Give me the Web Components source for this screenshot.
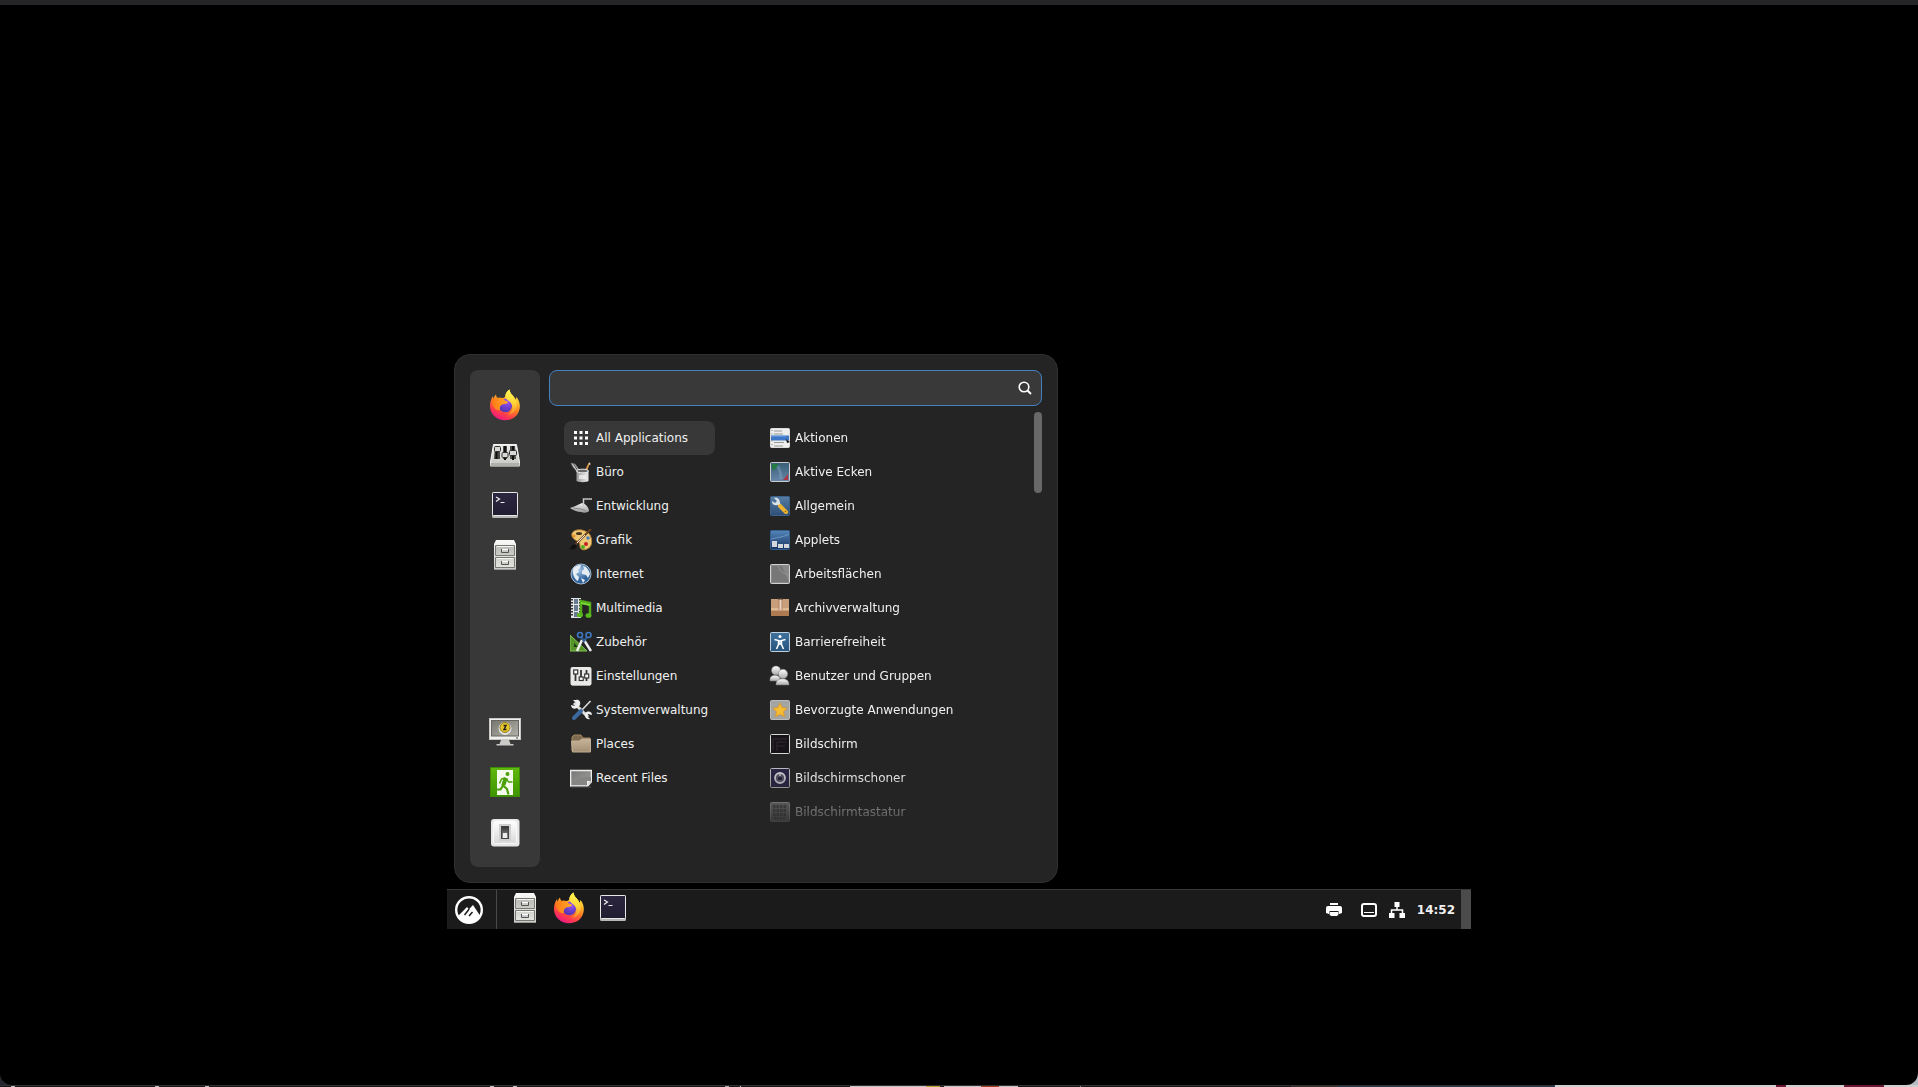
<!DOCTYPE html>
<html lang="de">
<head>
<meta charset="utf-8">
<title>Desktop</title>
<style>
  html, body {
    margin: 0;
    height: 100%;
  }
  body {
    background: linear-gradient(90deg, #25272f 50%, #b4bcc5 50%);
    font-family: "DejaVu Sans", sans-serif;
    font-size: 12px;
    color: #f0f0f0;
  }
</style>
</head>
<body>
<remote-viewer>
  <desktop-screen>
    <start-menu></start-menu>
    <task-bar></task-bar>
  </desktop-screen>
</remote-viewer>

<script>
const gradient = (id, from, to, dir = 'x2="0" y2="1"') => `
  <linearGradient id="${id}" ${dir}><stop stop-color="${from}"/><stop offset="1" stop-color="${to}"/></linearGradient>`;

// frame shared by the square settings icons
const tile = (fill, stroke) => `<rect x="1.5" y="1.5" width="19" height="19" rx="1" fill="${fill}" stroke="${stroke}"/>`;

const ICONS = {
  // launcher icons, 32 units
  firefox: [32, `
    <defs>
      <linearGradient id="a" x1=".8" y1="0" x2=".3" y2="1">
        <stop stop-color="#fff44f"/><stop offset=".3" stop-color="#ffc130"/>
        <stop offset=".55" stop-color="#ff7a25"/><stop offset=".8" stop-color="#ff3750"/><stop offset="1" stop-color="#e8168a"/>
      </linearGradient>
      <radialGradient id="b" cx=".65" cy=".2" r=".9"><stop stop-color="#a55cf0"/><stop offset=".5" stop-color="#7040d0"/><stop offset="1" stop-color="#4a34a8"/></radialGradient>
      <linearGradient id="c"><stop stop-color="#ff7a18"/><stop offset="1" stop-color="#ffab27"/></linearGradient>
      <linearGradient id="d" x2="0" y2="1"><stop stop-color="#fff650"/><stop offset=".5" stop-color="#ffd93a"/><stop offset="1" stop-color="#ff8a28"/></linearGradient>
    </defs>
    <path fill="url(#a)" d="M1 17c0-4 1-7 3-10 0 1 .3 2 .8 2.600C5.300 7.500 6 6.300 7 5.500c0 1.500.8 3 2.200 3.500 1.400-.4 2.800-.2 4.300.2L16 8c0-3 1.800-6 4.500-7.500.3 3.500 2.500 5 4.500 7.500.8 1 1.200 2 1.600 3l.9-3c2.500 3 3.500 6.500 3.300 10C30.300 26 24 31.300 16 31.300S1 25.500 1 17z"/>
    <circle cx="16.300" cy="16.500" r="6.800" fill="url(#b)"/>
    <path fill="url(#d)" d="M20.500.5c.3 3.500 2.500 5 4.500 7.500 2.500 3.200 3.700 8 1.500 12.500-1.500 3-4.500 5-7.500 5.500 4-3 5.500-7 3.500-11-.9-2-3-3.200-4.500-4.500C15.500 7.500 16.500 3 20.500.5z"/>
    <path fill="url(#c)" d="M3 11c2-1.500 4-2 6-2 2-.4 4 0 5.500.8.5 1.500 2 2 4 2.700.8.4.4 1.200-.5 1.700-1.800 1-3.500.6-4.800 1.300-2 1-3 3-2.200 5.500C6 22 3 17 3 11z"/>`],
  mixer: [32, `
    <defs>${gradient('a', '#ededeb', '#c6c6c3')}</defs>
    <path d="M4.500 5.500h23l3 17.500v4h-29v-4z" fill="url(#a)" stroke="#f5f5f4"/>
    <path d="M1.500 24h29v3h-29z" fill="#b0b0ad"/>
    <path d="M6 7h5v13H5zm8 0h4v13h-4zm7 0h5l1 13h-6z" fill="#4a4a48"/>
    <g fill="#d8d8d6" stroke="#30302e"><rect x="5.500" y="7.500" width="6" height="5" rx="1"/><rect x="13" y="13.500" width="6" height="5" rx="1"/><rect x="20.500" y="11.500" width="7" height="5" rx="1"/></g>
    <path d="M7.500 13v7M16 7v6M16 19v2M24 7v4M24 17v4" stroke="#111" stroke-width="2"/>`],
  terminal: [32, `
    <defs>${gradient('a', '#2c2640', '#211d31')}</defs>
    <rect x="3" y="3" width="26" height="26" rx="1.500" fill="#b7b7b5"/>
    <rect x="3.500" y="3.500" width="25" height="23" rx="1" fill="url(#a)" stroke="#e8e8e8"/>
    <path d="M7 8l3.500 2L7 12.500M11.500 13.500H15.500" fill="none" stroke="#eee" stroke-width="1.200"/>`],
  files: [32, `
    <defs>${gradient('a', '#fafaf9', '#c9c9c6')}${gradient('b', '#b9b9b5', '#e3e3e0')}</defs>
    <path d="M7 1h18l2 4v26H5V5z" fill="url(#a)"/>
    <path d="M6.500 6.500h19v10h-19zM6.500 18.500h19v10h-19z" fill="url(#b)" stroke="#777774"/>
    <path d="M7.500 7.500h17M7.500 19.500h17" stroke="#f3f3f2"/>
    <path d="M12.500 10v3.500h7V10M12.500 22v3.500h7V22" fill="#ccc" stroke="#555"/>
    <path d="M13 10.500h6M13 22.500h6" stroke="#fff"/><path d="M5 30.500h22" stroke="#999"/>`],
  lock: [32, `
    <defs>${gradient('a', '#77776f', '#b0b0a8', 'x2="1" y2="1"')}</defs>
    <rect x=".5" y="2.500" width="31" height="21" fill="#efefed" stroke="#c8c8c5"/>
    <rect x="2.500" y="4.500" width="27" height="15.500" fill="url(#a)" stroke="#666660"/>
    <path d="M12 24h8l1.500 4h3v1.500h-17V28h3z" fill="#cacac7"/>
    <path d="M27 22h2" stroke="#444"/>
    <circle cx="16" cy="12.500" r="6.500" fill="#e3e3df"/><circle cx="16" cy="11.500" r="5" fill="#e8c729" stroke="#8b7925"/>
    <path d="M14.500 9.500h2.500l-2 4h2.500" fill="none" stroke="#222" stroke-width="1.500"/>`],
  logout: [32, `
    <defs>${gradient('a', '#62b80e', '#3e9500')}</defs>
    <rect x="1.500" y="1.500" width="29" height="29" fill="url(#a)" stroke="#3d8a08"/>
    <path d="M8 4h16v25H8z" fill="#f4fbed"/>
    <g fill="none" stroke="#4ca00b" stroke-width="2.200" stroke-linejoin="round"><circle cx="18.500" cy="8" r="1.200" fill="#4ca00b" stroke-width="1.500"/>
    <path d="M16.500 12l-3 7 4.500 4 1.500 5.500M14 19.500l-2.500 4H5.500"/><path d="M16.500 12l-4 1-2 4.500M17.500 12.500l2 3.500h4" stroke-width="1.500"/><path d="M16.700 12l-2.200 7" stroke-width="4"/></g>`],
  power: [32, `
    <defs>${gradient('a', '#ffffff', '#d9d9d9')}${gradient('b', '#333', '#999')}</defs>
    <rect x="2" y="3" width="28.500" height="27.500" rx="3" fill="#e7e7e7"/>
    <rect x="4.500" y="5" width="23" height="22.500" rx="2" fill="url(#a)" stroke="#f8f8f8"/>
    <rect x="10" y="8" width="12" height="17" fill="#d0d0d0"/>
    <rect x="12.500" y="10.500" width="7" height="12" fill="url(#b)" stroke="#444"/>
    <path d="M14 17h4v5h-4z" fill="#ececec"/>`],
  start: [28, `
    <circle cx="14" cy="14" r="12.800" fill="none" stroke="#fff" stroke-width="2.400"/>
    <path d="M3.500 19.500L12 11l2 2.300 4-4.300 7 10.500C23 24 19 26.500 14 26.500S5.500 24 3.500 19.500z" fill="#fff"/>
    <path d="M9.500 19l4.700-6M17.500 16l-3.500 4" stroke="#1b1b1b" stroke-width="1.500"/>`],

  // tray symbols, 16 units
  printer: [16, `<path fill="#fff" d="M4 1h8v2H4zM2 4h12a2 2 0 0 1 2 2v5l-3 1V9H3v3l-3-1V6a2 2 0 0 1 2-2zM4 10h8v3l-1 1H5l-1-1z"/><path fill="#fff" d="M2 9h1.500v4.500zM14 9h-1.500v4.500z"/>`],
  screen: [16, `<rect x="1" y="2" width="14" height="12" rx="2" fill="none" stroke="#fff" stroke-width="2"/><path d="M3 10.500h10" stroke="#fff"/>`],
  network: [16, `<path fill="#fff" d="M5.500 0h5v5h-5zM0 11h5.500v5H0zM10.500 11H16v5h-5.500z"/><path d="M8 4v4M2.500 12V8h11v4" fill="none" stroke="#fff" stroke-width="1.500"/>`],
  search: [16, `<circle cx="7" cy="7" r="4.800" fill="none" stroke="#fff" stroke-width="1.600"/><path d="M10.500 10.500l3.500 3.500" stroke="#fff" stroke-width="2"/>`],

  // category icons, 22 units
  grid: [22, `<path d="M4 5.500h14M4 11h14M4 16.500h14" stroke="#fff" stroke-width="3" stroke-dasharray="3 2.500"/>`],
  office: [22, `
    <defs>${gradient('a', '#999', '#eee', '')}</defs>
    <path d="M1 2l4 1 5 7-2 2-5-6z" fill="#c9c9c9" stroke="#777" stroke-width=".6"/><path d="M3 2l5 8" stroke="#555"/>
    <path d="M18.500 2l1.500.5-4 9.500-2-1z" fill="#d9984a"/><path d="M20 1l.5 3-2-1z" fill="#f0dfc8"/>
    <path d="M6.500 10v10c2 1.500 10 1.500 12 0V10z" fill="url(#a)"/><ellipse cx="12.500" cy="10" rx="6" ry="1.800" fill="#666" stroke="#eee"/>
    <path d="M9 14h7v4H9z" fill="#f3f3f3" opacity=".7"/>`],
  dev: [22, `
    <defs>${gradient('a', '#f1f1f1', '#999')}</defs>
    <path d="M0 13c4-1 7-3 12-5 4 1 7 5 7 8-2 2-5 2-8 1-4 0-8-2-11-4z" fill="url(#a)"/>
    <path d="M13.500 12V4H22" fill="none" stroke="#ccc" stroke-width="1.500"/><path d="M14 4h7" stroke="#888" stroke-dasharray="1 1"/>
    <path d="M3 13l8 1 5 2" stroke="#777" fill="none" stroke-width=".7"/>`],
  graphics: [22, `
    <path d="M3 3c4-4 14-2 17 3 3 6 2 12-3 14-4 2-7 0-7-3s-1-4-3-5C3 10 0 6 3 3z" fill="#edc876" stroke="#b78535"/>
    <ellipse cx="9" cy="4.500" rx="3" ry="1.500" fill="#49331b"/><circle cx="16" cy="15" r="2" fill="#c71f1f"/><circle cx="18" cy="9" r="1.800" fill="#5181be"/><circle cx="13" cy="18" r="2" fill="#50ac24"/><circle cx="4" cy="7" r="1.500" fill="#e99126"/>
    <path d="M21 0L5 16" stroke="#694020" stroke-width="2"/><path d="M15 6l-8 8" stroke="#f0eee2"/><path d="M0 20c1-4 3-4 5-5l2 2c-1 3-4 4-7 3z" fill="#111"/>`],
  internet: [22, `
    <defs><radialGradient id="a" cx=".4" cy=".3"><stop stop-color="#a9c9eb"/><stop offset="1" stop-color="#31639b"/></radialGradient></defs>
    <circle cx="11" cy="11" r="10" fill="url(#a)" stroke="#a7bdd2"/>
    <path d="M3 6c2-3 5-4 8-4l-1 3-2 2 1 2-3 2 3 3-1 4c-3-1-6-7-5-12zM13 3c4 1 6 4 7 8l-2 4-2-3-4-1V8l2-2zM11 15l4 2-2 3z" fill="#e6edf2"/>`],
  media: [22, `
    <rect x="1" y="1" width="10" height="20" fill="#e4e4e4"/><path d="M2 2v18M10 2v18" stroke="#333" stroke-width="2" stroke-dasharray="1.500 1.500"/>
    <path d="M4 2h4v5H4zM4 8h4v6H4zM4 15h4v5H4z" fill="#667a91"/>
    <path d="M11 17V4l9 2v11" fill="none" stroke="#52a91a" stroke-width="2.500"/><path d="M11 6l9 2" stroke="#79dd34" stroke-width="2"/><ellipse cx="10" cy="18" rx="3" ry="2.300" fill="#59b91c"/><ellipse cx="18.500" cy="18.500" rx="3" ry="2.300" fill="#59b91c"/>`],
  tools: [22, `
    <path d="M0 4l17 16H0z" fill="#57942a" stroke="#85c657"/><path d="M4 12v4h4z" fill="#1f3b13"/>
    <path d="M12 9l-5 11M14 9l7 11" stroke="#eee" stroke-width="2.500"/><path d="M11 6l3 4 3-4" stroke="#345f9c" stroke-width="2" fill="none"/>
    <circle cx="10" cy="4" r="2.500" fill="none" stroke="#3d77c2" stroke-width="1.600"/><circle cx="18.500" cy="4" r="2.500" fill="none" stroke="#3d77c2" stroke-width="1.600"/>`],
  settings: [22, `
    <rect x=".5" y="2" width="21" height="18.500" rx="2" fill="#e9e9e8"/><path d="M2 20.500h18" stroke="#aaa"/>
    <path d="M5.500 5v11M11 5v11M16.500 5v11" stroke="#333" stroke-width="1.800"/><g fill="#fff" stroke="#333" stroke-width="1.200"><rect x="3.700" y="5" width="4" height="4"/><rect x="9.200" y="12" width="4" height="3.500"/><rect x="14.700" y="9" width="4" height="4"/></g>`],
  admin: [22, `
    <path d="M4 4l14 14" stroke="#ddd" stroke-width="3"/><path d="M3 1l3 3-1 3-4-1c0 3 3 5 6 3l3-3c1-3-1-6-4-5zM15 14c-1 4 2 7 5 6l-3-3 1-2 4 1c0-3-3-5-7-2z" fill="#eee"/>
    <path d="M20.500 2L11 12" stroke="#ddd" stroke-width="1.600"/><path d="M11 12l-7 7" stroke="#3b689e" stroke-width="4" stroke-linecap="round"/>`],
  folder: [22, `
    <defs>${gradient('a', '#c8b49a', '#a38f74')}</defs>
    <path d="M2 18V4l2-2h7l2 3h7v12z" fill="#7f6c50" stroke="#a18660"/><path d="M1.500 8h8l2-2h9v13h-18z" fill="url(#a)" stroke="#c1ad90"/>`],
  recent: [22, `
    <defs>${gradient('a', '#777775', '#a0a09e', 'x2="1" y2="1"')}</defs>
    <path d="M.5 3.500h21v11l-4 4.500H.5z" fill="url(#a)" stroke="#ededed" stroke-width="1.600"/><path d="M2 14c7-1 11-5 19-4v5l-4 3H2z" fill="#858583"/><path d="M21 14h-4v4.500z" fill="#eee"/><path d="M1 20h20" stroke="#555"/>`],

  // application icons, 22 units
  actions: [22, `
    ${tile('#eeeeec', '#ddd')}<path d="M2 8.500h18v5H2z" fill="#3c78c7"/><path d="M2 9h15" stroke="#79a8e5"/>
    <path d="M5 4h8M5 7h9M5 15.500h10M5 19h9" stroke="#999"/><path d="M3 3v16" stroke="#777" stroke-dasharray="1 2.500"/><path d="M17 12l4 3-3 1z" fill="#111"/>`],
  corners: [22, `
    <defs>${gradient('a', '#385f75', '#6787aa')}</defs>${tile('url(#a)', '#ccc')}<path d="M3 3h6c-1 4-3 6-6 6z" fill="#257b44"/><path d="M19 19h-5l5-6z" fill="#ae3642"/><path d="M9 5c2 4 3 9 3 13" stroke="#8aa9c2" stroke-width="3" opacity=".4" fill="none"/>`],
  general: [22, `
    <defs>${gradient('a', '#577ea5', '#2d4d75')}</defs>${tile('url(#a)', '#3e638b')}<path d="M5 3l3 3-2 2-3-2c0 4 3 5 6 4l2 3 2-2-2-3c0-3-2-6-6-5z" fill="#dce3e8"/><path d="M11 11l6 6" stroke="#edb42f" stroke-width="4" stroke-linecap="round"/><circle cx="16.500" cy="16.500" r=".8" fill="#916214"/>`],
  applets: [22, `
    <defs>${gradient('a', '#5485ba', '#17345e')}</defs>${tile('url(#a)', '#355f91')}<path d="M3 12h5v6H3zM9 15h5v4H9zM15 15h5v4h-5z" fill="#d2d8dc"/><path d="M2 10c8-2 13-2 18-5" stroke="#6c98c7" fill="none"/>`],
  workspaces: [22, `${tile('#888', '#d0d0d0')}<path d="M3 3h10l6 14v2H3z" fill="#777"/><path d="M9 3c2 6 7 8 10 9" fill="none" stroke="#969696"/>`],
  archive: [22, `
    <path d="M2 2h18v17H2z" fill="#c99e7a"/><path d="M2 14h18v5H2z" fill="#ae7a52"/><path d="M2 12h18" stroke="#ddb994" stroke-width="2"/>
    <path d="M9.500 2h4v11h-4z" fill="#ae8265"/><path d="M11.500 2v11" stroke="#ead5c0" stroke-width="2"/><path d="M9 1h5v1.500H9z" fill="#45372e"/>`],
  access: [22, `
    <defs>${gradient('a', '#3e739e', '#27537c')}</defs>${tile('url(#a)', '#bfd0df')}<circle cx="11" cy="5.500" r="1.500" fill="#fff"/><path d="M5.500 8.500l4 1v4L7.500 18M16.500 8.500l-4 1v4l2 4.500M10 10v3h2v-3z" fill="none" stroke="#fff" stroke-width="1.500"/>`],
  users: [22, `
    <defs>${gradient('a', '#fff', '#a8a8a7')}</defs><g fill="url(#a)" stroke="#777" stroke-width=".5"><path d="M1 14c0-5 10-5 10 0v2H1z"/><circle cx="7" cy="5.500" r="4.500"/><path d="M7 19c0-7 13-7 13 0v1H7z"/><circle cx="14" cy="9" r="4.700"/></g>`],
  preferred: [22, `${tile('#a4a4a2', '#bcbcba')}<path d="M11 4l2.200 4.600 5 .6-3.700 3.500 1 5-4.500-2.500-4.500 2.500 1-5-3.700-3.500 5-.6z" fill="#f5bd36" stroke="#df9119" stroke-width=".7"/>`],
  display: [22, `${tile('#171419', '#d5d5d5')}<path d="M4 17V6h14M8 18V9h9M8 13h8" stroke="#302b33" fill="none"/>`],
  saver: [22, `${tile('#292444', '#b8b8bd')}<circle cx="11" cy="11" r="5" fill="#555365" stroke="#c7c7cf" stroke-width="1.800"/><path d="M9 10h4v3H9z" fill="#25213b"/><path d="M10 8h2" stroke="#eee"/>`],
  keyboard: [22, `${tile('#888', '#bbb')}<path d="M4 5.500h14M4 9.500h14M4 13.500h14" stroke="#555" stroke-width="3" stroke-dasharray="2.500 1"/><path d="M5 17h12" stroke="#555" stroke-width="2" stroke-dasharray="2 1"/>`],
};

class AppIcon extends HTMLElement {
  constructor() {
    super();
    this.attachShadow({mode: 'open'});
  }

  connectedCallback() {
    const [box, shapes] = ICONS[this.getAttribute('name')];
    const size = this.getAttribute('size') || box;
    this.shadowRoot.innerHTML = `
      <style>
        :host {
          display: block;
          flex: none;
        }
        svg {
          display: block;
        }
      </style>
      <svg width="${size}" height="${size}" viewBox="0 0 ${box} ${box}" aria-hidden="true">${shapes}</svg>
    `;
  }
}

class RemoteViewer extends HTMLElement {
  constructor() {
    super();
    this.attachShadow({mode: 'open'});
    this.shadowRoot.innerHTML = `
      <style>
        :host {
          display: flex;
          flex-direction: column;
          min-height: 100vh;
        }
        .titlebar {
          height: 5px;
          background: #252528;
        }
        .view {
          flex: 1;
          display: flex;
          align-items: center;
          justify-content: center;
          background: #000;
          border-radius: 0 0 12px 12px;
        }
        /* top edge of the windows behind the viewer */
        .backdrop {
          height: 2px;
          background:
            linear-gradient(#333032, #333032) 0 0 / 81% 1px no-repeat,
            linear-gradient(90deg,
              #18181a 11px, #bbb 11px 15px, #18181a 15px 155px, #bbb 155px 159px, #18181a 159px 205px,
              #bbb 205px 209px, #18181a 209px 490px, #bbb 490px 494px, #18181a 494px 513px, #bbb 513px 517px,
              #18181a 517px 725px, #aaa 725px 729px, #18181a 729px 740px, #ccc 740px 741px, #18181a 741px 850px,
              #c4c4c4 850px 926px, #b5a12d 926px 940px, #222 940px 944px, #c4c4c4 944px 981px, #9c3a1c 981px 999px,
              #c4c4c4 999px 1018px, #18181a 1018px 1080px, #888 1080px 1081px, #18181a 1081px 1291px, #38302f 1291px 1337px,
              #263a4d 1337px 1555px, #cfcfcf 1555px 1776px, #6b1733 1776px 1786px, #cfcfcf 1786px 1844px,
              #6b1733 1844px 1884px, #cfcfcf 1884px);
        }
      </style>
      <div class="titlebar"></div>
      <div class="view"><slot></slot></div>
      <div class="backdrop"></div>
    `;
  }
}

class DesktopScreen extends HTMLElement {
  constructor() {
    super();
    this.attachShadow({mode: 'open'});
    this.shadowRoot.innerHTML = `
      <style>
        :host {
          display: flex;
          flex-direction: column;
          justify-content: flex-end;
          width: 1024px;
          max-width: 100%;
          min-height: 768px;
        }
      </style>
      <slot></slot>
    `;
  }
}

class SearchBox extends HTMLElement {
  constructor() {
    super();
    this.attachShadow({mode: 'open'});
    this.shadowRoot.innerHTML = `
      <style>
        :host {
          display: flex;
          align-items: center;
          height: 36px;
          box-sizing: border-box;
          padding: 0 8px;
          border: 1px solid #4480c4;
          border-radius: 8px;
          background: #393939;
        }
        input {
          flex: 1;
          min-width: 0;
          border: 0;
          padding: 0;
          outline: 0;
          background: none;
          color: inherit;
          font: inherit;
        }
      </style>
      <input type="text" aria-label="Suche">
      <app-icon name="search"></app-icon>
    `;
  }
}

class MenuItem extends HTMLElement {
  constructor() {
    super();
    this.attachShadow({mode: 'open'});
  }

  connectedCallback() {
    this.shadowRoot.innerHTML = `
      <style>
        :host {
          display: block;
        }
        button {
          display: flex;
          align-items: center;
          gap: 4px;
          width: 100%;
          height: 34px;
          padding: 0 6px;
          border: 0;
          border-radius: 8px;
          background: none;
          color: inherit;
          font: inherit;
          white-space: nowrap;
        }
        :host([selected]) button {
          background: #383838;
        }
      </style>
      <button type="button"><app-icon name="${this.getAttribute('icon')}"></app-icon><slot></slot></button>
    `;
  }
}

class LaunchButton extends HTMLElement {
  constructor() {
    super();
    this.attachShadow({mode: 'open'});
  }

  connectedCallback() {
    this.shadowRoot.innerHTML = `
      <style>
        :host {
          display: block;
        }
        button {
          display: flex;
          align-items: center;
          justify-content: center;
          width: 100%;
          height: 100%;
          padding: 0;
          border: 0;
          background: none;
        }
      </style>
      <button type="button" aria-label="${this.getAttribute('label')}"><app-icon name="${this.getAttribute('icon')}"></app-icon></button>
    `;
  }
}

const CATEGORIES = [
  ['grid', 'All Applications'],
  ['office', 'Büro'],
  ['dev', 'Entwicklung'],
  ['graphics', 'Grafik'],
  ['internet', 'Internet'],
  ['media', 'Multimedia'],
  ['tools', 'Zubehör'],
  ['settings', 'Einstellungen'],
  ['admin', 'Systemverwaltung'],
  ['folder', 'Places'],
  ['recent', 'Recent Files'],
];

const APPLICATIONS = [
  ['actions', 'Aktionen'],
  ['corners', 'Aktive Ecken'],
  ['general', 'Allgemein'],
  ['applets', 'Applets'],
  ['workspaces', 'Arbeitsflächen'],
  ['archive', 'Archivverwaltung'],
  ['access', 'Barrierefreiheit'],
  ['users', 'Benutzer und Gruppen'],
  ['preferred', 'Bevorzugte Anwendungen'],
  ['display', 'Bildschirm'],
  ['saver', 'Bildschirmschoner'],
  ['keyboard', 'Bildschirmtastatur'],
];

const menuItems = (list, selected) => list.map(([icon, text]) =>
  `<menu-item icon="${icon}"${text === selected ? ' selected' : ''}>${text}</menu-item>`).join('');

class StartMenu extends HTMLElement {
  constructor() {
    super();
    this.attachShadow({mode: 'open'});
    this.shadowRoot.innerHTML = `
      <style>
        :host {
          display: flex;
          gap: 9px;
          box-sizing: border-box;
          width: 604px;
          margin: 0 0 6px 7px;
          padding: 15px;
          border: 1px solid #303030;
          border-radius: 16px;
          background: #242424;
        }
        .favorites {
          display: flex;
          flex-direction: column;
          flex: none;
          box-sizing: border-box;
          width: 70px;
          min-height: 497px;
          padding: 10px 0;
          border-radius: 8px;
          background: #383838;
        }
        .favorites launch-button {
          height: 50px;
        }
        .session {
          margin-top: auto;
        }
        .content {
          flex: 1;
        }
        .lists {
          display: flex;
          margin-top: 6px;
        }
        .categories {
          width: 151px;
          padding: 9px 48px 0 15px;
        }
        .applications {
          flex: 1;
          height: 413px;
          padding-top: 9px;
          overflow: hidden;
          -webkit-mask-image: linear-gradient(#000 calc(100% - 62px), transparent);
          mask-image: linear-gradient(#000 calc(100% - 62px), transparent);
        }
        .scrollbar {
          width: 8px;
          height: 81px;
          border-radius: 4px;
          background: #686868;
        }
      </style>
      <nav class="favorites">
        <launch-button icon="firefox" label="Firefox"></launch-button>
        <launch-button icon="mixer" label="Systemeinstellungen"></launch-button>
        <launch-button icon="terminal" label="Terminal"></launch-button>
        <launch-button icon="files" label="Dateien"></launch-button>
        <launch-button class="session" icon="lock" label="Bildschirm sperren"></launch-button>
        <launch-button icon="logout" label="Abmelden"></launch-button>
        <launch-button icon="power" label="Ausschalten"></launch-button>
      </nav>
      <div class="content">
        <search-box></search-box>
        <div class="lists">
          <div class="categories">${menuItems(CATEGORIES, 'All Applications')}</div>
          <div class="applications">${menuItems(APPLICATIONS)}</div>
          <div class="scrollbar"></div>
        </div>
      </div>
    `;
  }
}

class TaskBar extends HTMLElement {
  constructor() {
    super();
    this.attachShadow({mode: 'open'});
    this.shadowRoot.innerHTML = `
      <style>
        :host {
          display: flex;
          box-sizing: border-box;
          height: 40px;
          border-top: 1px solid #383838;
          background: #1b1b1b;
        }
        .start {
          width: 42px;
          padding: 0 6px 0 1px;
          border-right: 1px solid #484848;
        }
        .start, .windows, .tray {
          display: flex;
          align-items: center;
        }
        .start launch-button {
          flex: 1;
        }
        .windows {
          padding: 0 6px 3px;
        }
        .windows launch-button {
          width: 44px;
        }
        .tray {
          gap: 12px;
          margin-left: auto;
          padding-right: 6px;
        }
        .printer {
          margin-right: 7px;
        }
        time {
          font-weight: bold;
        }
        .show-desktop {
          width: 10px;
          padding: 0;
          border: 0;
          background: #4b4b4b;
        }
      </style>
      <div class="start"><launch-button icon="start" label="Menü"></launch-button></div>
      <div class="windows">
        <launch-button icon="files" label="Dateien"></launch-button>
        <launch-button icon="firefox" label="Firefox"></launch-button>
        <launch-button icon="terminal" label="Terminal"></launch-button>
      </div>
      <div class="tray">
        <launch-button class="printer" icon="printer" label="Drucker"></launch-button>
        <launch-button icon="screen" label="Bildschirm"></launch-button>
        <launch-button icon="network" label="Netzwerk"></launch-button>
        <time>14:52</time>
      </div>
      <button class="show-desktop" type="button" aria-label="Desktop anzeigen"></button>
    `;
  }
}

customElements.define('app-icon', AppIcon);
customElements.define('search-box', SearchBox);
customElements.define('menu-item', MenuItem);
customElements.define('launch-button', LaunchButton);
customElements.define('start-menu', StartMenu);
customElements.define('task-bar', TaskBar);
customElements.define('desktop-screen', DesktopScreen);
customElements.define('remote-viewer', RemoteViewer);
</script>
</body>
</html>
